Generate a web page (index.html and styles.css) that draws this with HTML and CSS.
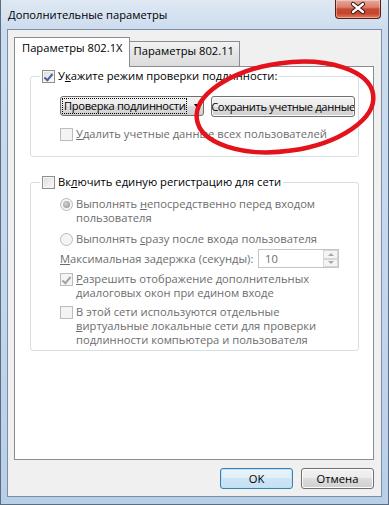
FILE: index.html
```html
<!DOCTYPE html>
<html lang="ru">
<head>
    <meta charset="UTF-8">
    <title>Дополнительные параметры</title>
    <link rel="stylesheet" href="styles.css">
</head>
<body>

<div class="window">
    <div class="titlebar">
        <span class="title">Дополнительные параметры</span>
        <div class="close">
            <svg width="46" height="19" viewBox="0 0 46 19">
                <path d="M18 5 L28 13 M28 5 L18 13" stroke="#3b1410" stroke-width="4.2" stroke-linecap="round"/>
                <path d="M18 5 L28 13 M28 5 L18 13" stroke="#fff" stroke-width="2.3" stroke-linecap="round"/>
            </svg>
        </div>
    </div>

    <div class="client">
        <div class="tabs">
            <div class="tab active">Параметры 802.1X</div>
            <div class="tab">Параметры 802.11</div>
        </div>

        <div class="panel">
            <fieldset class="group g1">
                <legend><span class="cb checked"></span><span class="lbl">У<u>к</u>ажите режим проверки подлинности:</span></legend>
                <div class="body">
                    <div class="auth-row">
                        <div class="select"><span class="focus">Проверка подлинности</span><span class="arrow"></span></div>
                        <div class="btn save"><span>Сохранить учетные данные</span></div>
                    </div>
                    <div class="opt disabled del"><span class="cb"></span><span><u>У</u>далить учетные данные всех пользователей</span></div>
                </div>
            </fieldset>

            <fieldset class="group g2">
                <legend><span class="cb"></span><span class="lbl">Вк<u>л</u>ючить единую регистрацию для сети</span></legend>
                <div class="body disabled">
                    <div class="opt r1"><span class="radio on"></span><span>Выполнять <u>н</u>епосредственно перед входом<br>пользователя</span></div>
                    <div class="opt r2"><span class="radio"></span><span>Выполнять <u>с</u>разу после входа пользователя</span></div>
                    <div class="delay">
                        <span><u>М</u>аксимальная задержка (секунды):</span>
                        <div class="spin">
                            <span class="val">10</span>
                            <div class="spin-btns"><span class="up"></span><span class="down"></span></div>
                        </div>
                    </div>
                    <div class="opt c3"><span class="cb checked"></span><span><u>Р</u>азрешить отображение дополнительных<br>диалоговых окон при едином входе</span></div>
                    <div class="opt c4"><span class="cb"></span><span>В этой сети используются отдельные<br><u>в</u>иртуальные локальные сети для проверки<br>подлинности компьютера и пользователя</span></div>
                </div>
            </fieldset>
        </div>

        <div class="buttons">
            <div class="btn default">OK</div>
            <div class="btn">Отмена</div>
        </div>
    </div>

    <svg class="mark" width="389" height="505" viewBox="0 0 389 505">
        <ellipse cx="284" cy="107" rx="89" ry="44" transform="rotate(-8 284 107)" fill="none" stroke="#e3121b" stroke-width="4.5"/>
    </svg>
</div>

</body>
</html>
```

FILE: styles.css
```css
* { box-sizing: border-box; }
body { margin: 0; font-family: "Open Sans", "Noto Sans", sans-serif; font-size: 11.2px; color: #000; line-height: 14px; }
u { text-decoration: underline; text-underline-offset: 1px; }

.window {
    position: relative;
    width: 389px;
    height: 505px;
    display: flex;
    flex-direction: column;
    padding: 0 6px 7px 6px;
    border: 1px solid #5b6d83;
    border-top: none;
    background: linear-gradient(to bottom, #dfe8f3 0px, #ccdcee 30px, #c2d6ec 300px, #b9cfe8 505px);
}

.titlebar { height: 29px; display: flex; align-items: flex-start; flex-shrink: 0; }
.title { margin-top: 8px; padding-left: 1px; color: #000; }
.close {
    margin-left: auto;
    margin-right: 1px;
    width: 46px;
    height: 19px;
    border: 1px solid #5a1d16;
    border-top: none;
    border-radius: 0 0 4px 4px;
    background: linear-gradient(to bottom, #e6a89c 0%, #d9806f 40%, #c64a32 50%, #c7452c 75%, #e0805c 100%);
    box-shadow: inset 0 0 0 1px rgba(255,255,255,0.35);
}
.close svg { display: block; margin: -1px 0 0 -1px; }

.client {
    flex: 1;
    display: flex;
    flex-direction: column;
    background: #f0f0f0;
    border: 1px solid #7d8ea4;
    padding: 7px 7px 7px 6px;
}

/* tabs */
.tabs { display: flex; align-items: flex-end; height: 29px; }
.tab {
    border: 1px solid #898c95;
    border-bottom: none;
    background: linear-gradient(to bottom, #f3f3f3, #e5e5e5 50%, #dcdcdc);
    height: 25px;
    padding: 2px 5px 0 4px;
    margin-left: -1px;
}
.tab.active {
    position: relative;
    z-index: 1;
    background: #fff;
    height: 30px;
    margin: 0 0 -1px 0;
    padding: 3px 6px 0 7px;
}

.panel {
    flex: 1;
    background: #fff;
    border: 1px solid #898c95;
    padding: 2px 14px 0 15px;
}

/* group boxes */
.group {
    margin: 0;
    padding: 0;
    border: 1px solid #d5dfe5;
    border-radius: 3px;
    min-width: 0;
}
.group legend {
    display: flex;
    align-items: center;
    height: 14px;
    margin-left: 9px;
    padding: 0 2px;
}
.group legend .lbl { margin-left: 3px; }
.group .body { padding-left: 29px; }
.g1 .body { padding-top: 13px; padding-bottom: 15px; }
.g2 { margin-top: 18px; }
.g2 .body { padding-top: 8px; padding-bottom: 3px; }

.disabled, .disabled .opt { color: #6d6d6d; }

/* checkbox / radio */
.cb {
    width: 13px;
    height: 13px;
    flex-shrink: 0;
    border: 1px solid #8e8f8f;
    background: linear-gradient(135deg, #dcdcdc, #fbfbfb);
    box-shadow: inset 0 0 0 1px #f4f4f4;
    position: relative;
}
.cb.checked::after {
    content: "";
    position: absolute;
    left: 3px;
    top: 1px;
    width: 3px;
    height: 7px;
    border: solid #4a5f9c;
    border-width: 0 2px 2px 0;
    transform: rotate(40deg);
}
.disabled .cb, .del .cb {
    border-color: #bcbcbc;
    background: #f4f4f4;
    box-shadow: none;
}
.disabled .cb.checked::after { border-color: #a2a2a2; }

.radio {
    width: 13px;
    height: 13px;
    flex-shrink: 0;
    border-radius: 50%;
    border: 1px solid #bababa;
    background: #f4f4f4;
    position: relative;
}
.radio.on::after {
    content: "";
    position: absolute;
    left: 2px;
    top: 2px;
    width: 7px;
    height: 7px;
    border-radius: 50%;
    background: radial-gradient(circle at 40% 40%, #d2d2d2, #8d8d8d);
}

.opt { display: flex; align-items: flex-start; white-space: nowrap; }
.opt .cb, .opt .radio { margin-top: 1px; margin-right: 3px; }

.del { margin-top: 10px; color: #6d6d6d; }
.r2 { margin-top: 7px; }
.c3 { margin-top: 4px; }
.c4 { margin-top: 5px; }

/* dropdown + button row */
.auth-row { display: flex; align-items: flex-start; gap: 7px; }
.select {
    width: 144px;
    height: 20px;
    display: flex;
    align-items: center;
    padding: 0 1px;
    border: 1px solid #707070;
    border-radius: 3px;
    background: linear-gradient(to bottom, #f2f2f2 0%, #ebebeb 50%, #dddddd 50%, #cfcfcf 100%);
}
.select .focus { border: 1px dotted #000; padding: 0 1px; line-height: 14px; white-space: nowrap; letter-spacing: -0.35px; }
.select .arrow {
    margin-left: 7px;
    border-left: 3.5px solid transparent;
    border-right: 3.5px solid transparent;
    border-top: 4px solid #000;
}

.btn {
    height: 21px;
    display: flex;
    align-items: center;
    justify-content: center;
    border: 1px solid #707070;
    border-radius: 3px;
    background: linear-gradient(to bottom, #f2f2f2 0%, #ebebeb 50%, #dddddd 50%, #cfcfcf 100%);
    box-shadow: inset 0 0 0 1px #fbfbfb;
    white-space: nowrap;
    overflow: hidden;
}
.btn.save { width: 144px; }
.btn.save span { flex-shrink: 0; letter-spacing: -0.35px; }

/* delay row */
.delay { display: flex; align-items: center; height: 19px; margin-top: 3px; white-space: nowrap; }
.spin {
    margin-left: auto;
    margin-right: 19px;
    width: 81px;
    flex-shrink: 0;
    height: 19px;
    display: flex;
    border: 1px solid #c5c5c5;
    background: #fff;
}
.spin .val { flex: 1; padding-left: 6px; line-height: 17px; color: #6d6d6d; }
.spin-btns { width: 15px; display: flex; flex-direction: column; }
.spin-btns span {
    flex: 1;
    border: 1px solid #d6d6d6;
    background: #f4f4f4;
    display: flex;
    align-items: center;
    justify-content: center;
}
.spin-btns .up::after { content: ""; border: 3px solid transparent; border-bottom: 3px solid #a8a8a8; border-top: 0; }
.spin-btns .down::after { content: ""; border: 3px solid transparent; border-top: 3px solid #a8a8a8; border-bottom: 0; }

/* bottom buttons */
.buttons { display: flex; justify-content: flex-end; gap: 8px; margin-top: 8px; }
.buttons .btn { width: 73px; }
.btn.default {
    border-color: #3c7fb1;
    background: linear-gradient(to bottom, #eaf4fb 0%, #e0eef8 50%, #cfe5f4 50%, #c6e0f2 100%);
    box-shadow: inset 0 0 0 1px #b5e3fa;
}

.mark { position: absolute; left: 0; top: 0; pointer-events: none; }
```
